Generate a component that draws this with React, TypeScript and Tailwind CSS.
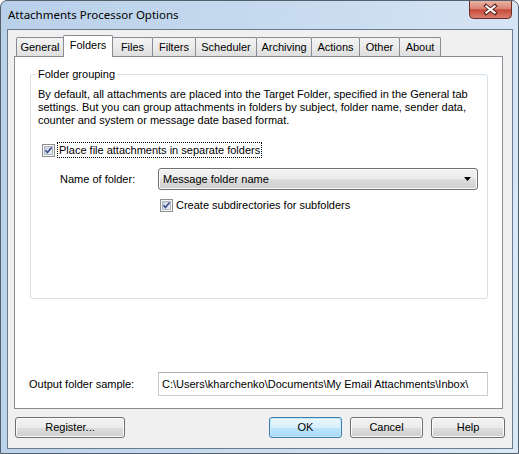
import React from 'react';

const tabs = [
  { name: 'General', w: 'w-[48px]' },
  { name: 'Folders', w: 'w-[50px]' },
  { name: 'Files', w: 'w-[41px]' },
  { name: 'Filters', w: 'w-[44px]' },
  { name: 'Scheduler', w: 'w-[62px]' },
  { name: 'Archiving', w: 'w-[56px]' },
  { name: 'Actions', w: 'w-[49px]' },
  { name: 'Other', w: 'w-[41px]' },
  { name: 'About', w: 'w-[42px]' },
];

const btn =
  'h-[21px] rounded-[3px] border border-[#707070] bg-[linear-gradient(to_bottom,#f2f2f2_0%,#ebebeb_50%,#dddddd_51%,#cfcfcf_100%)] text-[11px] leading-[19px] text-black shadow-[inset_0_0_0_1px_#fcfcfc]';

const CheckBox = () => (
  <svg width="13" height="13" viewBox="0 0 13 13" className="shrink-0">
    <defs>
      <linearGradient id="cb" x1="0" y1="0" x2="1" y2="1">
        <stop offset="0" stopColor="#c3cedc" />
        <stop offset="1" stopColor="#f1f4f8" />
      </linearGradient>
    </defs>
    <rect x="0.5" y="0.5" width="12" height="12" fill="#f6f6f6" stroke="#8f8f8f" />
    <rect x="2.5" y="2.5" width="8" height="8" fill="url(#cb)" stroke="#aeb7c3" />
    <path d="M3.4 6.2 L5.4 8.6 L9.6 3.4" fill="none" stroke="#3b4f8f" strokeWidth="1.6" />
  </svg>
);

const CloseButton = () => (
  <svg width="43" height="18" viewBox="0 0 43 18" className="absolute top-0 right-[6px]">
    <defs>
      <linearGradient id="cl" x1="0" y1="0" x2="0" y2="1">
        <stop offset="0" stopColor="#eab4a6" />
        <stop offset="0.45" stopColor="#d9816f" />
        <stop offset="0.5" stopColor="#c54a38" />
        <stop offset="1" stopColor="#dc8173" />
      </linearGradient>
    </defs>
    <path d="M0.5 0 V13.5 Q0.5 17.5 4.5 17.5 H38.5 Q42.5 17.5 42.5 13.5 V0" fill="url(#cl)" stroke="#6b2d25" />
    <path d="M17 5 L26 12 M26 5 L17 12" stroke="#5a2a24" strokeWidth="3.8" strokeLinecap="square" />
    <path d="M17.3 5.3 L25.7 11.7 M25.7 5.3 L17.3 11.7" stroke="#ffffff" strokeWidth="2" strokeLinecap="square" />
  </svg>
);

export default function App() {
  return (
    <div
      className="relative w-[519px] h-[454px] flex flex-col rounded-t-[7px] border border-[#55606d] bg-[linear-gradient(100deg,#b9d0e9_0%,#c9dcf0_55%,#dbe8f6_100%)] text-black"
      style={{ fontFamily: '"Liberation Sans", Arial, sans-serif' }}
    >
      <div
        className="h-[28px] shrink-0 flex items-center pl-[7px] text-[11.5px] text-black"
        style={{ fontFamily: '"Noto Sans", "Liberation Sans", sans-serif' }}
      >
        Attachments Processor Options
      </div>
      <CloseButton />

      <div className="ml-[6px] mr-[5px] mb-[4px] flex-1 border border-[#6b7b8e] bg-[#f0f0f0] flex flex-col">
        {/* tab strip */}
        <div className="mt-[5px] ml-[8px] h-[21px] flex items-end">
          {tabs.map((t, i) => {
            const active = t.name === 'Folders';
            return (
              <div
                key={t.name}
                className={`${t.w} ${i > 0 ? '-ml-px' : ''} ${
                  active
                    ? 'relative z-10 h-[22px] -mb-px bg-white leading-[19px]'
                    : 'h-[19px] bg-[linear-gradient(to_bottom,#f3f3f3,#ebebeb_50%,#dedede)] leading-[19px]'
                } border border-b-0 border-[#898c95] rounded-t-[2px] text-center text-[11px]`}
              >
                {t.name}
              </div>
            );
          })}
        </div>

        {/* tab panel */}
        <div className="ml-[6px] w-[489px] h-[353px] border border-[#898c95] bg-white flex flex-col text-[11px] leading-[13px]">
          <div className="mt-[17px] ml-[15px] w-[458px] h-[225px] border border-[#d5dfe5] rounded-[3px] pl-[7px] flex flex-col">
            <div className="-mt-[7px] -ml-[2px] px-[2px] w-fit bg-white">Folder grouping</div>
            <p className="mt-[7px]">
              By default, all attachments are placed into the Target Folder, specified in the General tab
              <br />
              settings. But you can group attachments in folders by subject, folder name, sender data,
              <br />
              counter and system or message date based format.
            </p>

            <div className="mt-[15px] ml-[4px] h-[16px] flex items-center">
              <CheckBox />
              <span className="ml-[2px] h-[16px] px-px border border-dotted border-black leading-[14px]">
                Place file attachments in separate folders
              </span>
            </div>

            <div className="mt-[10px] ml-[22px] flex items-center">
              <span className="w-[98px]">Name of folder:</span>
              <div className="w-[320px] h-[22px] rounded-[3px] border border-[#707070] bg-[linear-gradient(to_bottom,#f2f2f2_0%,#ebebeb_50%,#dddddd_51%,#cfcfcf_100%)] shadow-[inset_0_0_0_1px_#fbfbfb] flex items-center pl-[4px] pr-[6px]">
                <span className="flex-1">Message folder name</span>
                <svg width="7" height="4" viewBox="0 0 7 4">
                  <path d="M0 0 H7 L3.5 4 Z" fill="#000" />
                </svg>
              </div>
            </div>

            <div className="mt-[7px] ml-[122px] h-[16px] flex items-center">
              <CheckBox />
              <span className="ml-[3px]">Create subdirectories for subfolders</span>
            </div>
          </div>

          <div className="mt-auto mb-[12px] ml-[14px] flex items-center">
            <span className="w-[129px]">Output folder sample:</span>
            <div className="w-[330px] h-[24px] border border-[#c9ced6] border-t-[#abadb3] bg-white flex items-center pl-[3px]">
              C:\Users\kharchenko\Documents\My Email Attachments\Inbox\
            </div>
          </div>
        </div>

        {/* buttons */}
        <div className="mt-[8px] px-[7px] flex">
          <button className={`${btn} w-[110px]`}>Register...</button>
          <div className="flex-1" />
          <div className="flex gap-[8px]">
            <button className="w-[73px] h-[21px] rounded-[3px] border border-[#3c7fb1] bg-[linear-gradient(to_bottom,#eaf6fd_0%,#d9f0fc_50%,#bee6fd_51%,#a7d9f5_100%)] shadow-[inset_0_0_0_1px_#c5e9fb] text-[11px] leading-[19px]">
              OK
            </button>
            <button className={`${btn} w-[73px]`}>Cancel</button>
            <button className={`${btn} w-[74px]`}>Help</button>
          </div>
        </div>
      </div>
    </div>
  );
}
